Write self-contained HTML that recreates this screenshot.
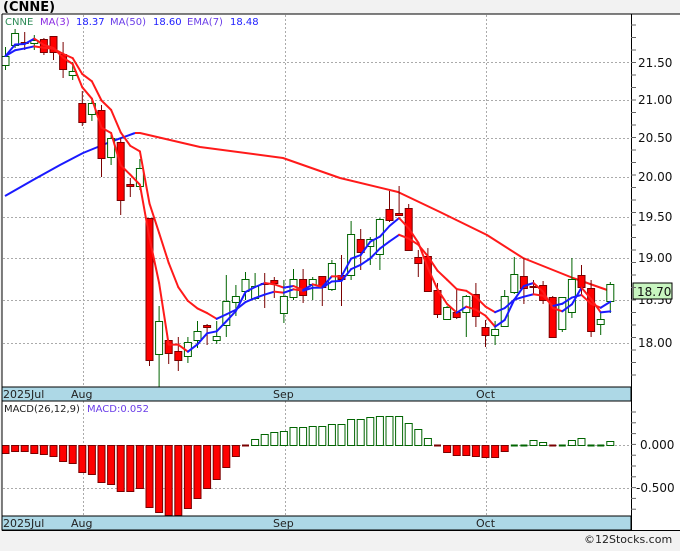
<!DOCTYPE html>
<html><head><meta charset="utf-8">
<style>
html,body{margin:0;padding:0;background:#f2f2f2;}
body{width:680px;height:546px;overflow:hidden;font-family:"Liberation Sans",sans-serif;}
svg text{font-family:"DejaVu Sans","Liberation Sans",sans-serif;}
</style></head><body>
<svg id="s" width="680" height="546" xmlns="http://www.w3.org/2000/svg">
<rect x="0" y="0" width="680" height="546" fill="#f2f2f2"/>
<rect x="2" y="14" width="678" height="516" fill="#ffffff"/>
<text x="3" y="11" font-size="13" font-weight="bold" fill="#000" font-family="Liberation Sans">(CNNE)</text>
<g id="grid" stroke="#aaa" stroke-width="1" stroke-dasharray="2,2"></g>
<g id="c"></g>
<rect x="2" y="387" width="629" height="14" fill="#add8e6" stroke="#000" stroke-width="1"/>
<rect x="2" y="516" width="629" height="14" fill="#add8e6" stroke="#000" stroke-width="1"/>
<g font-size="11" fill="#222">
<text x="3" y="398">2025Jul</text><text x="71" y="398">Aug</text><text x="273" y="398">Sep</text><text x="476" y="398">Oct</text>
<text x="3" y="527">2025Jul</text><text x="71" y="527">Aug</text><text x="273" y="527">Sep</text><text x="476" y="527">Oct</text>
</g>
<g font-size="10">
<text x="5" y="25" fill="#2e8b57">CNNE</text>
<text x="40" y="25" fill="#8a2be2">MA(3)</text>
<text x="76" y="25" fill="#2020ff">18.37</text>
<text x="110" y="25" fill="#6a3de8">MA(50)</text>
<text x="153" y="25" fill="#2020ff">18.60</text>
<text x="187" y="25" fill="#6a3de8">EMA(7)</text>
<text x="230" y="25" fill="#2020ff">18.48</text>
<text x="4" y="412" fill="#222">MACD(26,12,9)</text>
<text x="87" y="412" fill="#6a3de8">MACD:0.052</text>
</g>
<g font-size="12" fill="#111">
<text x="638" y="67">21.50</text><text x="638" y="104">21.00</text><text x="638" y="142">20.50</text>
<text x="638" y="181">20.00</text><text x="638" y="221">19.50</text><text x="638" y="262">19.00</text>
<text x="638" y="304">18.50</text><text x="638" y="347">18.00</text>
<text x="640" y="449">0.000</text><text x="636" y="492">-0.500</text>
</g>
<rect x="633" y="283" width="39" height="16" fill="#c8f5c0" stroke="#000" stroke-width="1"/>
<text x="637" y="296" font-size="12" fill="#111">18.70</text>
<line x1="2" y1="14" x2="680" y2="14" stroke="#000"/>
<line x1="2" y1="14" x2="2" y2="530" stroke="#000"/>
<line x1="631.5" y1="14" x2="631.5" y2="530" stroke="#000"/>
<line x1="2" y1="530.5" x2="680" y2="530.5" stroke="#000"/>
<g id="ticks" stroke="#666"></g>
<text x="584" y="543" font-size="11" fill="#222">©12Stocks.com</text>
</svg>
<script>
var NS="http://www.w3.org/2000/svg";
function el(p,t,a){var e=document.createElementNS(NS,t);for(var k in a)e.setAttribute(k,a[k]);document.getElementById(p).appendChild(e);return e;}
// grid
[62,100,138,177,217,258,300,343,445,488].forEach(function(y){el('grid','line',{x1:3,y1:y+.5,x2:631,y2:y+.5});});
[83,285,486].forEach(function(x){el('grid','line',{x1:x+.5,y1:15,x2:x+.5,y2:387});el('grid','line',{x1:x+.5,y1:401,x2:x+.5,y2:516});});
for(var y=25;y<387;y+=12.5){el('ticks','line',{x1:631,y1:y,x2:636,y2:y});}
for(var y=412;y<516;y+=10.8){el('ticks','line',{x1:631,y1:y,x2:636,y2:y});}
// candles [open, close, high, low] in pixel y
var C=[[65,56,47,70],[45,33,29,48],[42,43,32,50],[43,40,35,50],[39,52,38,55],[36,52,36,60],[54,69,42,78],[75,71,62,80],
[103,122,91,126],[114,103,98,121],[110,158,105,177],[157,138,135,165],[142,200,138,215],[184,186,178,197],[186,168,159,190],
[218,360,218,366],[354,321,306,387],[340,353,340,364],[351,360,337,371],[356,342,337,363],[340,331,321,348],[325,327,324,345],
[340,336,321,344],[325,301,275,337],[302,296,285,316],[291,279,272,300],[298,286,273,300],[283,284,273,308],[280,283,277,298],
[313,296,280,323],[297,279,269,300],[279,295,269,303],[284,279,277,300],[276,287,283,306],[289,263,260,291],[275,279,255,306],
[275,234,221,280],[239,252,229,270],[246,239,237,265],[254,219,218,270],[209,220,191,222],[213,215,186,216],[208,250,204,251],
[257,263,250,277],[256,291,248,292],[290,314,283,318],[319,307,306,320],[312,317,290,319],[312,296,295,337],[294,316,283,327],
[327,335,320,347],[335,329,321,345],[326,296,290,327],[292,274,257,294],[276,288,258,304],[286,287,280,295],[285,300,281,304],
[297,337,296,337],[329,297,297,332],[312,279,258,318],[275,287,265,296],[288,331,280,337],[324,319,313,335],[301,284,282,313]];
function X(i){return 5+9.6*i;}
var g=document.getElementById('c');
// MA50 line
function poly(pts,col,w){el('c','polyline',{points:pts.map(function(p){return p.join(',')}).join(' '),fill:'none',stroke:col,'stroke-width':w||2,'stroke-linejoin':'round'});}
poly([[5,196],[33,180],[60,165],[83,153],[110,142],[135,133]],'#1a1aff');
poly([[135,133],[140,133],[200,147],[283,158],[340,178],[398,192],[440,212],[487,235],[523,258],[573,278],[610,291]],'#ff1a1a');
// candles
C.forEach(function(c,i){var x=X(i),o=c[0],cl=c[1],h=c[2],l=c[3];var red=cl>o;
 var col=red?'#7a0000':'#006400';
 el('c','line',{x1:x+.5,y1:h,x2:x+.5,y2:l,stroke:col,'stroke-width':1});
 var t=Math.min(o,cl),b=Math.max(o,cl);if(b-t<1){el('c','line',{x1:x-3,y1:t+.5,x2:x+4,y2:t+.5,stroke:col});return;}
 el('c','rect',{x:x-3,y:t+.5,width:7,height:b-t,fill:red?'#ff0000':'#ffffff',stroke:col,'stroke-width':1});
});
// MA3 / EMA7
var cl=C.map(function(c){return c[1];});
var ma=[],em=[],e=cl[0];
cl.forEach(function(v,i){var s=0,n=0;for(var j=Math.max(0,i-2);j<=i;j++){s+=cl[j];n++;}ma.push(s/n);e=i==0?v:e+(v-e)*0.25;em.push(e);});
function col(arr){for(var i=1;i<arr.length;i++){var c=arr[i]<arr[i-1]?'#1a1aff':'#ff1a1a';el('c','line',{x1:X(i-1)+.5,y1:arr[i-1],x2:X(i)+.5,y2:arr[i],stroke:c,'stroke-width':2,'stroke-linecap':'round'});}}
col(em);col(ma);
// MACD
var M=[453,451,451,453,454,456,461,463,472,474,482,484,491,491,488,507,512,515,515,508,498,488,479,467,456,447,
439,434,432,431,427,427,426,426,424,424,419,419,417,416,416,416,423,429,438,447,452,455,455,456,457,457,451,
445,443,440,442,447,445,440,438,443,445,441];
M.forEach(function(v,i){var x=X(i);
 if(Math.abs(v-445)<=2){el('c','line',{x1:x-3,y1:445.5,x2:x+4,y2:445.5,stroke:v>445?'#7a0000':'#006400','stroke-width':2});return;}
 if(v>445)el('c','rect',{x:x-3,y:445.5,width:7,height:v-445,fill:'#ff0000',stroke:'#7a0000','stroke-width':1});
 else el('c','rect',{x:x-3,y:v+.5,width:7,height:445-v,fill:'#fff',stroke:'#006400','stroke-width':1});
});
</script>
</body></html>
